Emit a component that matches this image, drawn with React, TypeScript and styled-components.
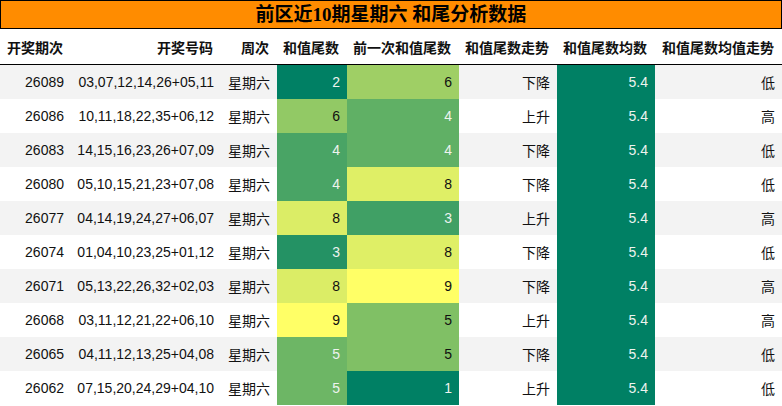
import React from "react";
import styled, { createGlobalStyle } from "styled-components";

const Global = createGlobalStyle`
  html, body { margin: 0; padding: 0; background: #ffffff; }
  body { font-family: "Liberation Sans", "Noto Sans CJK SC", sans-serif; }
  * { box-sizing: border-box; }
`;

const COLS = "71px 150px 56px 70px 112px 98px 98px 127px";

const Page = styled.div`
  width: 782px;
  display: flex;
  flex-direction: column;
`;

const Title = styled.div`
  height: 29px;
  border: 1px solid #000;
  background: #ff8c00;
  color: #000;
  font-family: "Liberation Serif", "Noto Sans CJK SC", serif;
  font-weight: bold;
  font-size: 19px;
  display: flex;
  align-items: center;
  justify-content: center;
  line-height: 1;
`;

const HeaderRow = styled.div`
  display: grid;
  grid-template-columns: ${COLS};
  height: 36px;
  border-bottom: 1px solid #000;
  background: #fff;
`;

const HeadCell = styled.div`
  display: flex;
  align-items: center;
  justify-content: flex-end;
  padding: 0 8px 0 0;
  font-family: "Liberation Sans", "Noto Sans CJK SC", sans-serif;
  font-weight: bold;
  font-size: 14px;
  color: #111;
  white-space: nowrap;
`;

const Row = styled.div<{ $alt: boolean }>`
  display: grid;
  grid-template-columns: ${COLS};
  height: 34px;
  background: ${(p) => (p.$alt ? "#f3f3f3" : "#ffffff")};
`;

const Cell = styled.div<{ $bg?: string; $fg?: string }>`
  display: flex;
  align-items: center;
  justify-content: flex-end;
  padding: 0 7px 0 0;
  font-size: 14px;
  color: ${(p) => p.$fg ?? "#111"};
  background: ${(p) => p.$bg ?? "transparent"};
  white-space: nowrap;
`;

type RowData = [string, string, number, number, string, string];

const rows: RowData[] = [
  ["26089", "03,07,12,14,26+05,11", 2, 6, "下降", "低"],
  ["26086", "10,11,18,22,35+06,12", 6, 4, "上升", "高"],
  ["26083", "14,15,16,23,26+07,09", 4, 4, "下降", "低"],
  ["26080", "05,10,15,21,23+07,08", 4, 8, "下降", "低"],
  ["26077", "04,14,19,24,27+06,07", 8, 3, "上升", "高"],
  ["26074", "01,04,10,23,25+01,12", 3, 8, "下降", "低"],
  ["26071", "05,13,22,26,32+02,03", 8, 9, "下降", "高"],
  ["26068", "03,11,12,21,22+06,10", 9, 5, "上升", "高"],
  ["26065", "04,11,12,13,25+04,08", 5, 5, "下降", "低"],
  ["26062", "07,15,20,24,29+04,10", 5, 1, "上升", "低"],
];

const LOW = [0, 128, 100];
const HIGH = [255, 255, 102];

function heat(v: number, min: number, max: number) {
  const t = max === min ? 0 : (v - min) / (max - min);
  const c = LOW.map((l, i) => Math.round(l + (HIGH[i] - l) * t));
  return {
    bg: `rgb(${c[0]},${c[1]},${c[2]})`,
    fg: t < 0.45 ? "#eef3ef" : "#111",
  };
}

const headers = [
  "开奖期次",
  "开奖号码",
  "周次",
  "和值尾数",
  "前一次和值尾数",
  "和值尾数走势",
  "和值尾数均数",
  "和值尾数均值走势",
];

export default function App() {
  const c4 = rows.map((r) => r[2]);
  const c5 = rows.map((r) => r[3]);
  const min4 = Math.min(...c4), max4 = Math.max(...c4);
  const min5 = Math.min(...c5), max5 = Math.max(...c5);
  const mean = heat(5.4, 5.4, 5.4);
  return (
    <Page>
      <Global />
      <Title>前区近10期星期六 和尾分析数据</Title>
      <HeaderRow>
        {headers.map((h) => (
          <HeadCell key={h}>{h}</HeadCell>
        ))}
      </HeaderRow>
      {rows.map((r, i) => {
        const h4 = heat(r[2], min4, max4);
        const h5 = heat(r[3], min5, max5);
        return (
          <Row key={r[0]} $alt={i % 2 === 0}>
            <Cell>{r[0]}</Cell>
            <Cell>{r[1]}</Cell>
            <Cell>星期六</Cell>
            <Cell $bg={h4.bg} $fg={h4.fg}>{r[2]}</Cell>
            <Cell $bg={h5.bg} $fg={h5.fg}>{r[3]}</Cell>
            <Cell>{r[4]}</Cell>
            <Cell $bg={mean.bg} $fg={mean.fg}>5.4</Cell>
            <Cell>{r[5]}</Cell>
          </Row>
        );
      })}
    </Page>
  );
}
